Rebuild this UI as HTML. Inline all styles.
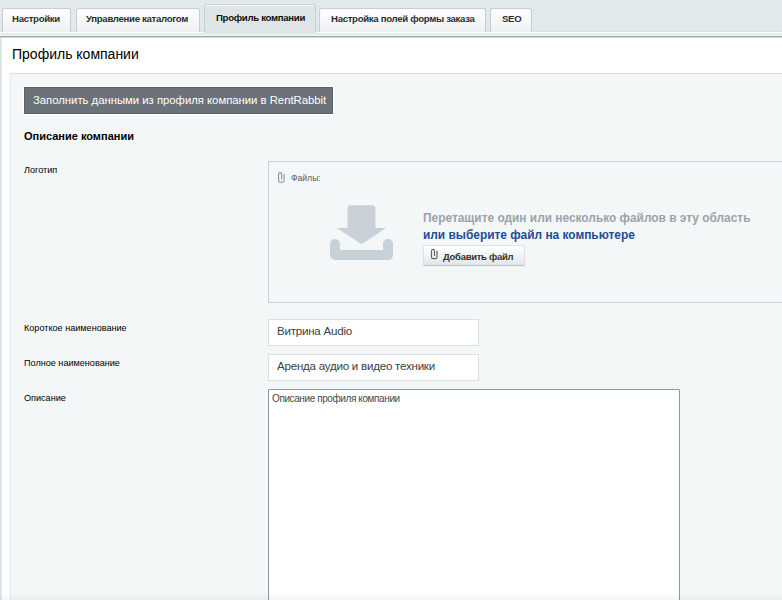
<!DOCTYPE html>
<html><head><meta charset="utf-8">
<style>
*{box-sizing:border-box;margin:0;padding:0}
html,body{width:782px;height:600px;overflow:hidden;background:#e2e9eb;font-family:"Liberation Sans",sans-serif;position:relative}
.abs{position:absolute}
.tab{position:absolute;top:8px;height:24px;border:1px solid #c6ced1;border-bottom:none;border-radius:3px 3px 0 0;background:linear-gradient(#ffffff,#eef1f2);font-size:9.6px;letter-spacing:-0.3px;font-weight:bold;color:#2b2f33;line-height:14px;padding-top:3px;white-space:nowrap;text-align:left}
.tab.act{top:4px;height:29px;background:linear-gradient(#e0e6e8,#dfe5e7);border-color:#c6ced1;box-shadow:inset 0 1px 0 #f7f9fa;padding-top:6px;color:#111}
.band1{left:0;top:32px;width:782px;height:1px;background:#fbfcfc}
.band2{left:0;top:33px;width:782px;height:2px;background:#e6ebec}
.band3{left:0;top:35px;width:782px;height:1px;background:#f2f5f6}
.band4{left:0;top:36px;width:782px;height:1px;background:#9ea5a8}
.band5{left:0;top:37px;width:782px;height:1px;background:#d3d8da}
.white{left:2px;top:38px;width:780px;height:562px;background:#fff}
.leftstrip{left:0;top:32px;width:2px;height:568px;background:linear-gradient(90deg,#d7e0e3 50%,#e6ecee 50%)}
.title{left:12px;top:45px;font-size:14px;color:#000;line-height:18px;white-space:nowrap}
.panel{left:10px;top:73px;width:772px;height:527px;background:#f4f7f8;border-top:1px solid #d6dfe2;border-left:1px solid #dfe8ec}
.btn{left:24px;top:87px;width:309px;height:27px;background:#6b7279;border:1px solid #5a6169;color:#fff;font-size:11.3px;line-height:25px;padding-left:8px;white-space:nowrap;box-shadow:0 0 0 1px #fff}
.h2{left:24px;top:129px;font-size:11px;font-weight:bold;color:#000;line-height:14px;white-space:nowrap}
.lbl{left:24px;font-size:9.1px;color:#000;line-height:12px;white-space:nowrap}
.drop{left:268px;top:161px;width:520px;height:142px;border:1px solid #c9cfd2;background:#f4f7f8}
.inp{left:268px;width:211px;height:27px;border:1px solid #dadfe2;background:#fff;font-size:11.6px;letter-spacing:-0.25px;color:#404040;padding-left:8px;line-height:14px;padding-top:4px;white-space:nowrap}
.ta{left:268px;top:389px;width:412px;height:230px;border:1px solid #8f979f;border-radius:1px;background:#fff;font-size:10px;letter-spacing:-0.4px;color:#4a4a4a;padding:3px 0 0 3px;line-height:12px;white-space:nowrap}
</style></head><body>
<div class="abs" style="left:0;top:31px;width:782px;height:1px;background:#d8dfe1"></div>
<div class="abs leftstrip"></div>
<div class="tab" style="left:2px;width:69px;padding-left:9px">Настройки</div>
<div class="tab" style="left:76px;width:124px;padding-left:9px">Управление каталогом</div>
<div class="tab" style="left:319px;width:167px;padding-left:11px">Настройка полей формы заказа</div>
<div class="tab" style="left:490px;width:42px;padding-left:11px">SEO</div>
<div class="abs band1"></div>
<div class="abs band2"></div>
<div class="abs band3"></div>
<div class="abs band4"></div>
<div class="abs band5"></div>
<div class="tab act" style="left:204px;width:112px;padding-left:11px">Профиль компании</div>
<div class="abs white"></div>
<div class="abs title">Профиль компании</div>
<div class="abs panel"></div>
<div class="abs btn">Заполнить данными из профиля компании в RentRabbit</div>
<div class="abs h2">Описание компании</div>
<div class="abs lbl" style="top:164px">Логотип</div>
<div class="abs drop"></div>
<svg class="abs" style="left:276px;top:171px" width="10" height="13" viewBox="0 0 10 13"><path d="M8.1 2.8V9.6Q8.1 11.2 6.5 11.2H4.2Q2.6 11.2 2.6 9.6V3.4Q2.6 1.6 4.1 1.6Q5.6 1.6 5.6 3.4V8.4" fill="none" stroke="#8e99a1" stroke-width="1.15"/></svg>
<div class="abs" style="left:291px;top:172px;font-size:8.6px;color:#5a5a5a;line-height:12px;white-space:nowrap">Файлы:</div>
<svg class="abs" style="left:330px;top:205px" width="64" height="56" viewBox="0 0 64 56"><path d="M21 0.3H42A3.5 3.5 0 0 1 45.5 3.8V23H56L31.5 39.2 7 23H17.5V3.8A3.5 3.5 0 0 1 21 0.3Z" fill="#c8d1d8"/><path d="M5 34a5 5 0 0 1 5 5v6h43v-6a5 5 0 0 1 10 0v11a5 5 0 0 1-5 5H5a5 5 0 0 1-5-5V39a5 5 0 0 1 5-5z" fill="#c8d1d8"/></svg>
<div class="abs" style="left:423px;top:211px;font-size:11.9px;font-weight:bold;color:#9aa3aa;line-height:15px;white-space:nowrap">Перетащите один или несколько файлов в эту область</div>
<div class="abs" style="left:423px;top:228px;font-size:11.9px;font-weight:bold;color:#1c4d98;line-height:15px;white-space:nowrap">или выберите файл на компьютере</div>
<div class="abs" style="left:423px;top:245px;width:102px;height:20px;border:1px solid #dfe3e5;border-radius:2px;background:linear-gradient(#ffffff,#e4e8ea);box-shadow:0 1px 1px #b9c0c4"></div>
<svg class="abs" style="left:429px;top:247px" width="10" height="13" viewBox="0 0 10 13"><path d="M8 3.8V10Q8 11.6 6.4 11.6H4.1Q2.5 11.6 2.5 10V4Q2.5 2.3 4 2.3Q5.5 2.3 5.5 4V9" fill="none" stroke="#5f6468" stroke-width="1.15"/></svg>
<div class="abs" style="left:443px;top:250px;font-size:9.5px;letter-spacing:-0.3px;font-weight:bold;color:#333;line-height:13px;white-space:nowrap">Добавить файл</div>
<div class="abs lbl" style="top:322px">Короткое наименование</div>
<div class="abs inp" style="top:319px">Витрина Audio</div>
<div class="abs lbl" style="top:357px">Полное наименование</div>
<div class="abs inp" style="top:354px">Аренда аудио и видео техники</div>
<div class="abs lbl" style="top:392px">Описание</div>
<div class="abs ta">Описание профиля компании</div>
<div class="abs" style="left:0;top:593px;width:782px;height:7px;background:linear-gradient(rgba(40,60,70,0),rgba(40,60,70,0.06))"></div>
</body></html>
